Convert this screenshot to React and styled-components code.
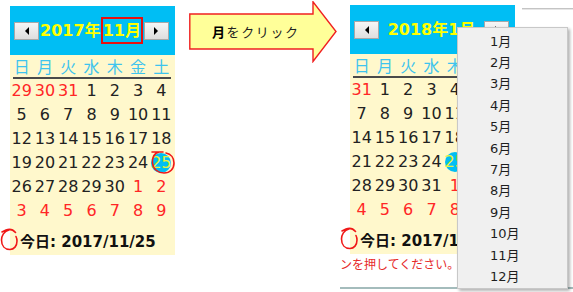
import React from "react";
import styled, { createGlobalStyle } from "styled-components";

const GlobalStyle = createGlobalStyle`
  html, body {
    margin: 0;
    padding: 0;
    background: #ffffff;
  }
  body {
    width: 573px;
    height: 292px;
    overflow: hidden;
    font-family: "DejaVu Sans", "Noto Sans CJK JP", sans-serif;
  }
`;

const Page = styled.div`
  display: flex;
  align-items: flex-start;
  padding-left: 10px;
  height: 292px;
  box-sizing: border-box;
`;

const Calendar = styled.div`
  position: relative;
  flex-shrink: 0;
  width: 165px;
  margin-top: ${(p) => p.$top}px;
  background: #fff8cc;
`;

const Header = styled.div`
  height: 49px;
  display: flex;
  align-items: center;
  justify-content: space-between;
  padding: 0 6px 0 4px;
  background: #00bef4;
`;

const NavButton = styled.div`
  width: 25px;
  height: 18px;
  box-sizing: border-box;
  display: flex;
  align-items: center;
  justify-content: center;
  border: 1px solid #a8a8a8;
  background: linear-gradient(#f6f6f6, #dedede);
  &::after {
    content: "";
    width: 0;
    height: 0;
    border-top: 4px solid transparent;
    border-bottom: 4px solid transparent;
    ${(p) =>
      p.$dir === "prev"
        ? "border-right: 4px solid #000;"
        : "border-left: 4px solid #000;"}
  }
`;

const Title = styled.div`
  font-family: "DejaVu Sans", "Noto Sans CJK JP", sans-serif;
  font-weight: bold;
  font-size: 16px;
  line-height: 23px;
  color: #ffff00;
  white-space: nowrap;
`;

const MonthBox = styled.span`
  display: inline-block;
  border: 2px solid #e81010;
`;

const WeekRow = styled.div`
  display: grid;
  grid-template-columns: repeat(7, 1fr);
  height: 22px;
  padding-right: 2px;
`;

const WeekDay = styled.div`
  display: flex;
  align-items: center;
  justify-content: center;
  font-family: "Noto Sans CJK JP", sans-serif;
  font-size: 16px;
  line-height: 20px;
  color: #3ec4ee;
`;

const Rule = styled.div`
  height: 2px;
  margin: 0 4px 0 3px;
  background: #4a4a4a;
`;

const DayGrid = styled.div`
  display: grid;
  grid-template-columns: repeat(7, 1fr);
  grid-auto-rows: 24px;
  padding-right: 2px;
`;

const DayCell = styled.div`
  position: relative;
  display: flex;
  align-items: center;
  justify-content: center;
  font-size: 16px;
  line-height: 20px;
  color: ${(p) => (p.$other ? "#ff2626" : "#222222")};
`;

const TodayMark = styled.span`
  display: flex;
  align-items: center;
  justify-content: center;
  width: 20px;
  height: 20px;
  border-radius: 50%;
  background: #00bef4;
  color: #e6f23a;
`;

const Ring = styled.svg`
  position: absolute;
  left: 1px;
  top: -1px;
  width: 25px;
  height: 25px;
  overflow: visible;
`;

const TodayRow = styled.div`
  position: relative;
  height: 29px;
  display: flex;
  align-items: center;
  padding: 3px 0 0 10px;
  font-weight: bold;
  font-size: 15px;
  color: #111;
  white-space: nowrap;
`;

const SideMark = styled.svg`
  position: absolute;
  left: -10px;
  top: 5px;
  width: 19px;
  height: 23px;
`;

const ArrowBox = styled.div`
  position: relative;
  flex-shrink: 0;
  width: 148px;
  height: 62px;
  margin: 1px 0 0 14px;
  display: flex;
  align-items: center;
  padding: 0 0 2px 23px;
  box-sizing: border-box;
`;

const ArrowShape = styled.svg`
  position: absolute;
  inset: 0;
  width: 148px;
  height: 62px;
`;

const ArrowLabel = styled.span`
  position: relative;
  font-family: "Noto Sans CJK JP", sans-serif;
  font-size: 13px;
  letter-spacing: 1.6px;
  color: #222;
  b {
    font-weight: bold;
    color: #000;
  }
`;

const RightShot = styled.div`
  position: relative;
  flex-shrink: 0;
  width: 233px;
  height: 289px;
  margin-left: 3px;
  display: flex;
  flex-direction: column;
  border-bottom: 2px solid #a4bcbc;
  box-sizing: border-box;
`;

const TopRow = styled.div`
  display: flex;
  align-items: flex-start;
  padding-left: 10px;
`;

const GridLine = styled.div`
  flex: 1;
  height: 1px;
  margin: 8px 0 0 7px;
  background: #c4c4c4;
  box-shadow: 0 1px 0 #e6e6e6;
`;

const Note = styled.div`
  margin-top: 2px;
  font-family: "Noto Sans CJK JP", sans-serif;
  font-size: 12px;
  line-height: 16px;
  color: #e62a2a;
  white-space: nowrap;
`;

const Dropdown = styled.div`
  position: absolute;
  left: 117px;
  top: 27px;
  width: 111px;
  height: 262px;
  box-sizing: border-box;
  padding-top: 3px;
  background: #f0f0f0;
  border: 1px solid #c8c8c8;
  box-shadow: 2px 2px 3px rgba(0, 0, 0, 0.3);
`;

const Option = styled.div`
  height: 21.4px;
  display: flex;
  align-items: center;
  padding-left: 32px;
  font-family: "DejaVu Sans", "Noto Sans CJK JP", sans-serif;
  font-size: 13px;
  line-height: 16px;
  color: #1e1e1e;
  overflow: hidden;
`;

const WEEK = ["日", "月", "火", "水", "木", "金", "土"];

function buildDays(prevLast, lead, len) {
  const days = [];
  for (let i = lead - 1; i >= 0; i--) days.push({ n: prevLast - i, other: true });
  for (let d = 1; d <= len; d++) days.push({ n: d, other: false });
  let next = 1;
  while (days.length < 42) days.push({ n: next++, other: true });
  return days;
}

function HandRing() {
  return (
    <Ring viewBox="0 0 25 25">
      <path
        d="M1 2 L12 2 M8 2 C3 3 1 8 1.5 13 C2 19 7 23 13 23 C19 23 23 19 23 13 C23 8 20 4 15 3"
        fill="none"
        stroke="#f01818"
        strokeWidth="1.6"
        strokeLinecap="round"
      />
    </Ring>
  );
}

function CalendarView({ top, year, month, boxed, days }) {
  return (
    <Calendar $top={top}>
      <Header>
        <NavButton $dir="prev" />
        <Title>
          {year}年{boxed ? <MonthBox>{month}月</MonthBox> : `${month}月`}
        </Title>
        <NavButton $dir="next" />
      </Header>
      <WeekRow>
        {WEEK.map((w) => (
          <WeekDay key={w}>{w}</WeekDay>
        ))}
      </WeekRow>
      <Rule />
      <DayGrid>
        {days.map((d, i) => {
          const today = !d.other && d.n === 25;
          return (
            <DayCell key={i} $other={d.other}>
              {today ? <TodayMark>{d.n}</TodayMark> : d.n}
              {today && boxed && <HandRing />}
            </DayCell>
          );
        })}
      </DayGrid>
      <TodayRow>
        <SideMark viewBox="0 0 19 23">
          <path
            d="M2 4 L6 2 C9 1 13 1.5 15.5 4.5 M9 2 C4 3 1.5 8 1.5 12 C1.5 18 5 21.5 10 21.5 C14 21.5 17 18 17 13 C17 11 16.5 9.5 16 8.5"
            fill="none"
            stroke="#f01818"
            strokeWidth="1.6"
            strokeLinecap="round"
          />
        </SideMark>
        今日: 2017/11/25
      </TodayRow>
    </Calendar>
  );
}

export default function App() {
  const november = buildDays(31, 3, 30);
  const january = buildDays(31, 1, 31);
  const months = Array.from({ length: 12 }, (_, i) => `${i + 1}月`);

  return (
    <>
      <GlobalStyle />
      <Page>
        <CalendarView top={6} year={2017} month={11} boxed days={november} />
        <ArrowBox>
          <ArrowShape viewBox="0 0 148 62">
            <polygon
              points="0.8,13 124,13 124,0.8 147,30.5 124,60.5 124,48 0.8,48"
              fill="#ffff99"
              stroke="#f02020"
              strokeWidth="1.4"
            />
          </ArrowShape>
          <ArrowLabel>
            <b>月</b>をクリック
          </ArrowLabel>
        </ArrowBox>
        <RightShot>
          <TopRow>
            <CalendarView top={5} year={2018} month={1} days={january} />
            <GridLine />
          </TopRow>
          <Note>ンを押してください。</Note>
          <Dropdown>
            {months.map((m) => (
              <Option key={m}>{m}</Option>
            ))}
          </Dropdown>
        </RightShot>
      </Page>
    </>
  );
}
